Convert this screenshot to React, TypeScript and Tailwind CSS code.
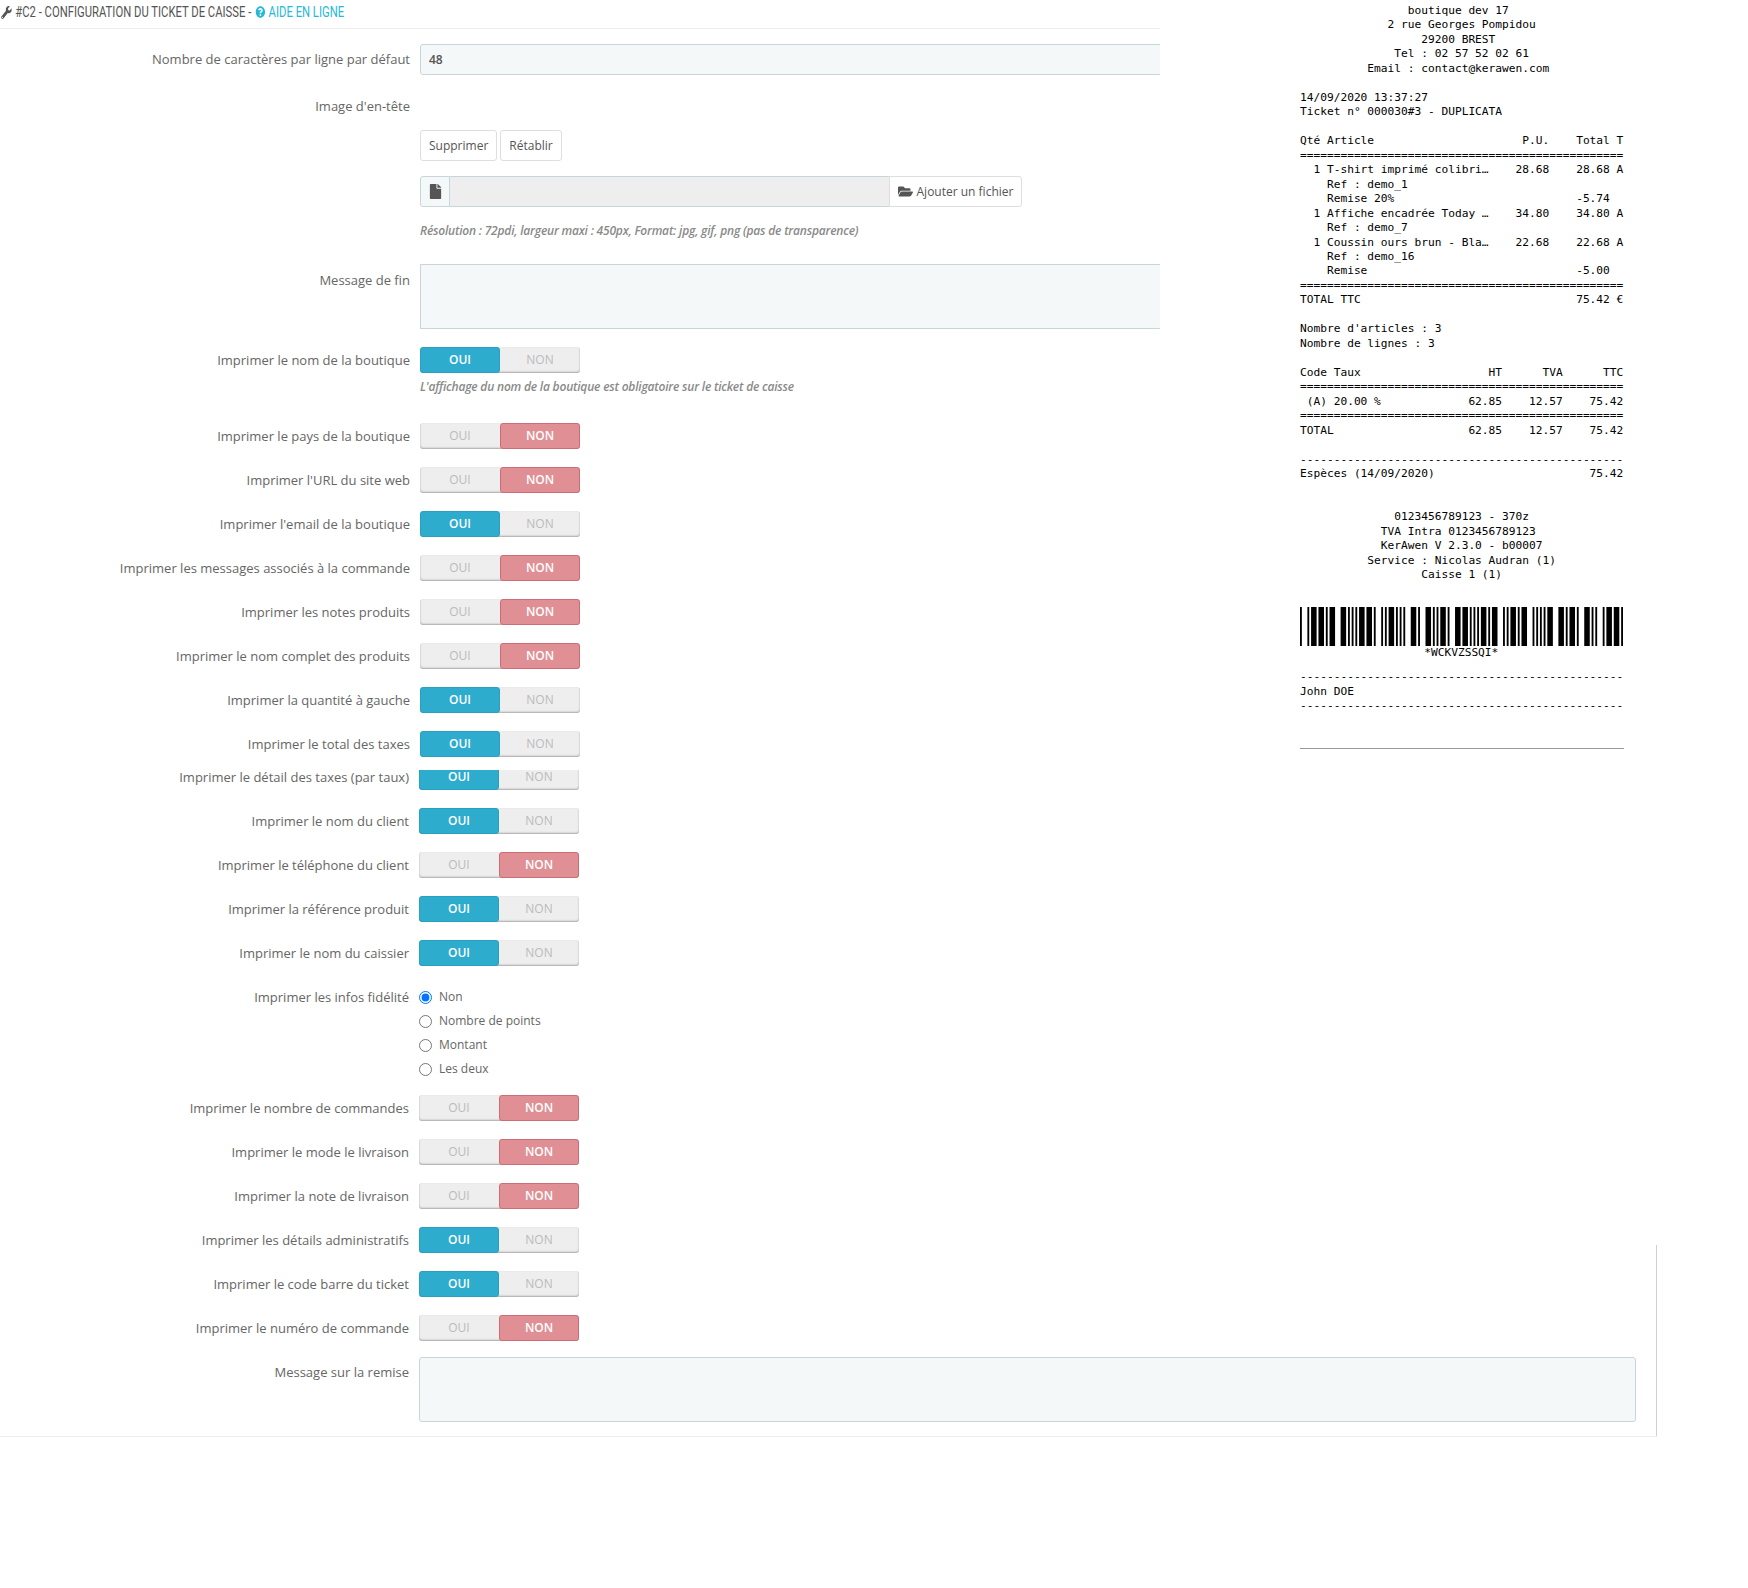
import { FaWrench, FaQuestionCircle, FaFile, FaFolderOpen } from "react-icons/fa";
import type { ReactNode } from "react";

const eq = "=".repeat(48);
const dash = "-".repeat(48);
const sp = (n: number) => " ".repeat(n);

const ticketTop = [
  sp(16) + "boutique dev 17",
  sp(13) + "2 rue Georges Pompidou",
  sp(18) + "29200 BREST",
  sp(14) + "Tel : 02 57 52 02 61",
  sp(10) + "Email : contact@kerawen.com",
  "",
  "14/09/2020 13:37:27",
  "Ticket n° 000030#3 - DUPLICATA",
  "",
  "Qté Article" + sp(22) + "P.U." + sp(4) + "Total T",
  eq,
  "  1 T-shirt imprimé colibri…" + sp(4) + "28.68" + sp(4) + "28.68 A",
  sp(4) + "Ref : demo_1",
  sp(4) + "Remise 20%" + sp(27) + "-5.74",
  "  1 Affiche encadrée Today …" + sp(4) + "34.80" + sp(4) + "34.80 A",
  sp(4) + "Ref : demo_7",
  "  1 Coussin ours brun - Bla…" + sp(4) + "22.68" + sp(4) + "22.68 A",
  sp(4) + "Ref : demo_16",
  sp(4) + "Remise" + sp(31) + "-5.00",
  eq,
  "TOTAL TTC" + sp(32) + "75.42 €",
  "",
  "Nombre d'articles : 3",
  "Nombre de lignes : 3",
  "",
  "Code Taux" + sp(19) + "HT" + sp(6) + "TVA" + sp(6) + "TTC",
  eq,
  " (A) 20.00 %" + sp(13) + "62.85" + sp(4) + "12.57" + sp(4) + "75.42",
  eq,
  "TOTAL" + sp(20) + "62.85" + sp(4) + "12.57" + sp(4) + "75.42",
  "",
  dash,
  "Espèces (14/09/2020)" + sp(23) + "75.42",
  "",
  "",
  sp(14) + "0123456789123 - 370z",
  sp(12) + "TVA Intra 0123456789123",
  sp(12) + "KerAwen V 2.3.0 - b00007",
  sp(10) + "Service : Nicolas Audran (1)",
  sp(18) + "Caisse 1 (1)",
].join("\n");

// code 39 patterns, 1 = wide element
const code39: Record<string, string> = {
  "*": "010010100",
  W: "111000000",
  C: "101001000",
  K: "100000011",
  V: "011000001",
  Z: "011010000",
  S: "001000110",
  Q: "000000111",
  I: "001001100",
};

const Barcode = () => {
  const bars: { x: number; w: number }[] = [];
  let x = 0;
  "*WCKVZSSQI*".split("").forEach((ch) => {
    code39[ch].split("").forEach((el, i) => {
      const w = el === "1" ? 3 : 1;
      if (i % 2 === 0) bars.push({ x, w });
      x += w;
    });
    x += 1;
  });
  return (
    <svg
      viewBox={`0 0 ${x - 1} 1`}
      preserveAspectRatio="none"
      className="block h-[39px] w-[323px]"
    >
      {bars.map((b, i) => (
        <rect key={i} x={b.x} y={0} width={b.w} height={1} fill="#000" />
      ))}
    </svg>
  );
};

const Ticket = () => (
  <div className="ml-[140px] w-[324px] pt-[4px] text-[11.2px] leading-[14.47px] text-black">
    <pre className="font-['DejaVu_Sans_Mono',monospace]">{ticketTop}</pre>
    <div className="mt-[24px]">
      <Barcode />
    </div>
    <pre className="pl-[3px] font-['DejaVu_Sans_Mono',monospace]">
      {sp(18) + "*WCKVZSSQI*"}
    </pre>
    <pre className="mt-[10px] font-['DejaVu_Sans_Mono',monospace]">
      {dash + "\nJohn DOE\n" + dash}
    </pre>
    <div className="mt-[34px] h-px w-[324px] bg-[#999]" />
  </div>
);

const Row = ({
  label,
  className,
  labelClassName,
  children,
}: {
  label: string;
  className?: string;
  labelClassName?: string;
  children: ReactNode;
}) => (
  <div className={`flex ${className ?? ""}`}>
    <div
      className={`w-[410px] shrink-0 text-right text-[13px] text-[#666] ${
        labelClassName ?? "leading-[26px]"
      }`}
    >
      {label}
    </div>
    <div className="ml-[10px] min-w-0 flex-1">{children}</div>
  </div>
);

const Toggle = ({ on }: { on: boolean }) => (
  <div className="flex h-[26px] w-[160px] rounded-[3px] bg-[#eee] text-[12px] leading-[24px] shadow-[inset_0_-1px_2px_rgba(0,0,0,0.3)]">
    <div
      className={`w-[80px] rounded-[3px] text-center ${
        on
          ? "border border-[#28a0bf] bg-[#2eacce] font-semibold text-white"
          : "border border-transparent text-[#bbb]"
      }`}
    >
      OUI
    </div>
    <div
      className={`w-[80px] rounded-[3px] text-center ${
        !on
          ? "border border-[#cd6d73] bg-[#e08f95] font-semibold text-white"
          : "border border-transparent text-[#bbb]"
      }`}
    >
      NON
    </div>
  </div>
);

const HelpText = ({ children }: { children: ReactNode }) => (
  <p className="text-[12px] leading-[16px] font-semibold tracking-[-0.2px] text-[#8a8a8a] italic">
    {children}
  </p>
);

const topToggles: [string, boolean][] = [
  ["Imprimer le pays de la boutique", false],
  ["Imprimer l'URL du site web", false],
  ["Imprimer l'email de la boutique", true],
  ["Imprimer les messages associés à la commande", false],
  ["Imprimer les notes produits", false],
  ["Imprimer le nom complet des produits", false],
  ["Imprimer la quantité à gauche", true],
  ["Imprimer le total des taxes", true],
];

const middleToggles: [string, boolean][] = [
  ["Imprimer le nom du client", true],
  ["Imprimer le téléphone du client", false],
  ["Imprimer la référence produit", true],
  ["Imprimer le nom du caissier", true],
];

const bottomToggles: [string, boolean][] = [
  ["Imprimer le nombre de commandes", false],
  ["Imprimer le mode le livraison", false],
  ["Imprimer la note de livraison", false],
  ["Imprimer les détails administratifs", true],
  ["Imprimer le code barre du ticket", true],
  ["Imprimer le numéro de commande", false],
];

const loyalty = ["Non", "Nombre de points", "Montant", "Les deux"];

const App = () => {
  return (
    <div className="min-h-[1588px] bg-white font-['Open_Sans',sans-serif] text-[#555]">
      <div className="flex h-[770px]">
        <div className="w-[1160px] shrink-0 overflow-hidden">
          <h3 className="h-[29px] border-b border-[#eee] pt-[2px] font-['Liberation_Sans_Narrow','Roboto',sans-serif] text-[14px] leading-[20px] text-[#555]">
            {/* no condensed face installed, so the heading is squeezed; icons are widened to compensate */}
            <div className="flex origin-left scale-x-[0.805] whitespace-nowrap">
              <FaWrench className="mt-[4px] mr-[3px] h-[13px] w-[16px]" />
              <span>#C2 - CONFIGURATION DU TICKET DE CAISSE -&nbsp;</span>
              <FaQuestionCircle className="mt-[4px] mr-[3px] h-[12px] w-[15px] text-[#25b9d7]" />
              <span className="text-[#25b9d7]">AIDE EN LIGNE</span>
            </div>
          </h3>

          <Row
            label="Nombre de caractères par ligne par défaut"
            className="mt-[15px]"
            labelClassName="leading-[31px]"
          >
            <div className="h-[31px] w-[761px] rounded-l-[3px] border border-[#c7d6db] bg-[#f5f8f9] px-[8px] text-[12px] leading-[29px] font-semibold text-[#555]">
              48
            </div>
          </Row>

          <Row label="Image d'en-tête" className="mt-[18px]">
            <div />
          </Row>

          <div className="mt-[11px] ml-[420px] flex gap-[3px] text-[12px] leading-[29px] text-[#555]">
            <div className="h-[31px] rounded-[3px] border border-[#dedede] px-[8px]">Supprimer</div>
            <div className="h-[31px] rounded-[3px] border border-[#dedede] px-[8px]">Rétablir</div>
          </div>

          <div className="mt-[15px] ml-[420px] flex h-[31px] w-[602px]">
            <div className="flex w-[30px] items-center justify-center rounded-l-[3px] border border-[#c7d6db] bg-[#f5f8f9]">
              <FaFile className="size-[15px] text-[#555]" />
            </div>
            <div className="flex-1 border-y border-[#c7d6db] bg-[#eee]" />
            <div className="flex w-[133px] items-center justify-center gap-[4px] rounded-r-[3px] border border-[#dedede] text-[12px] text-[#555]">
              <FaFolderOpen className="size-[15px]" />
              Ajouter un fichier
            </div>
          </div>

          <div className="mt-[16px] ml-[420px]">
            <HelpText>Résolution : 72pdi, largeur maxi : 450px, Format: jpg, gif, png (pas de transparence)</HelpText>
          </div>

          <Row
            label="Message de fin"
            className="mt-[25px]"
            labelClassName="pt-[3px] leading-[26px]"
          >
            <div className="h-[65px] w-[761px] border border-[#c7d6db] bg-[#f5f8f9]" />
          </Row>

          <Row label="Imprimer le nom de la boutique" className="mt-[18px]">
            <Toggle on />
            <div className="mt-[6px]">
              <HelpText>L'affichage du nom de la boutique est obligatoire sur le ticket de caisse</HelpText>
            </div>
          </Row>

          <div className="mt-[28px] flex flex-col gap-[18px]">
            {topToggles.map(([label, on]) => (
              <Row label={label} key={label}>
                <Toggle on={on} />
              </Row>
            ))}
          </div>
        </div>
        <Ticket />
      </div>

      <div className="relative h-[667px] w-[1657px] overflow-hidden border-b border-[#eee]">
        <div className="absolute top-[475px] right-0 bottom-0 w-px bg-[#ccd3d6]" />
        <div className="-mt-[6px] -ml-px flex flex-col gap-[18px]">
          <Row label="Imprimer le détail des taxes (par taux)">
            <Toggle on />
          </Row>
          {middleToggles.map(([label, on]) => (
            <Row label={label} key={label}>
              <Toggle on={on} />
            </Row>
          ))}
          <Row label="Imprimer les infos fidélité">
            <div className="-mb-[2px] flex flex-col gap-[4px] pt-[3px] text-[12px] leading-[20px] text-[#666]">
              {loyalty.map((item, i) => (
                <label className="flex items-center gap-[7px]" key={item}>
                  <input
                    type="radio"
                    name="loyalty"
                    defaultChecked={i === 0}
                    className="m-0 size-[13px]"
                  />
                  {item}
                </label>
              ))}
            </div>
          </Row>
          {bottomToggles.map(([label, on]) => (
            <Row label={label} key={label}>
              <Toggle on={on} />
            </Row>
          ))}
          <Row
            label="Message sur la remise"
            className="-mt-[2px]"
            labelClassName="pt-[2px] leading-[26px]"
          >
            <div className="h-[65px] w-[1217px] rounded-[3px] border border-[#c7d6db] bg-[#f5f8f9]" />
          </Row>
        </div>
      </div>
    </div>
  );
};

export default App;
